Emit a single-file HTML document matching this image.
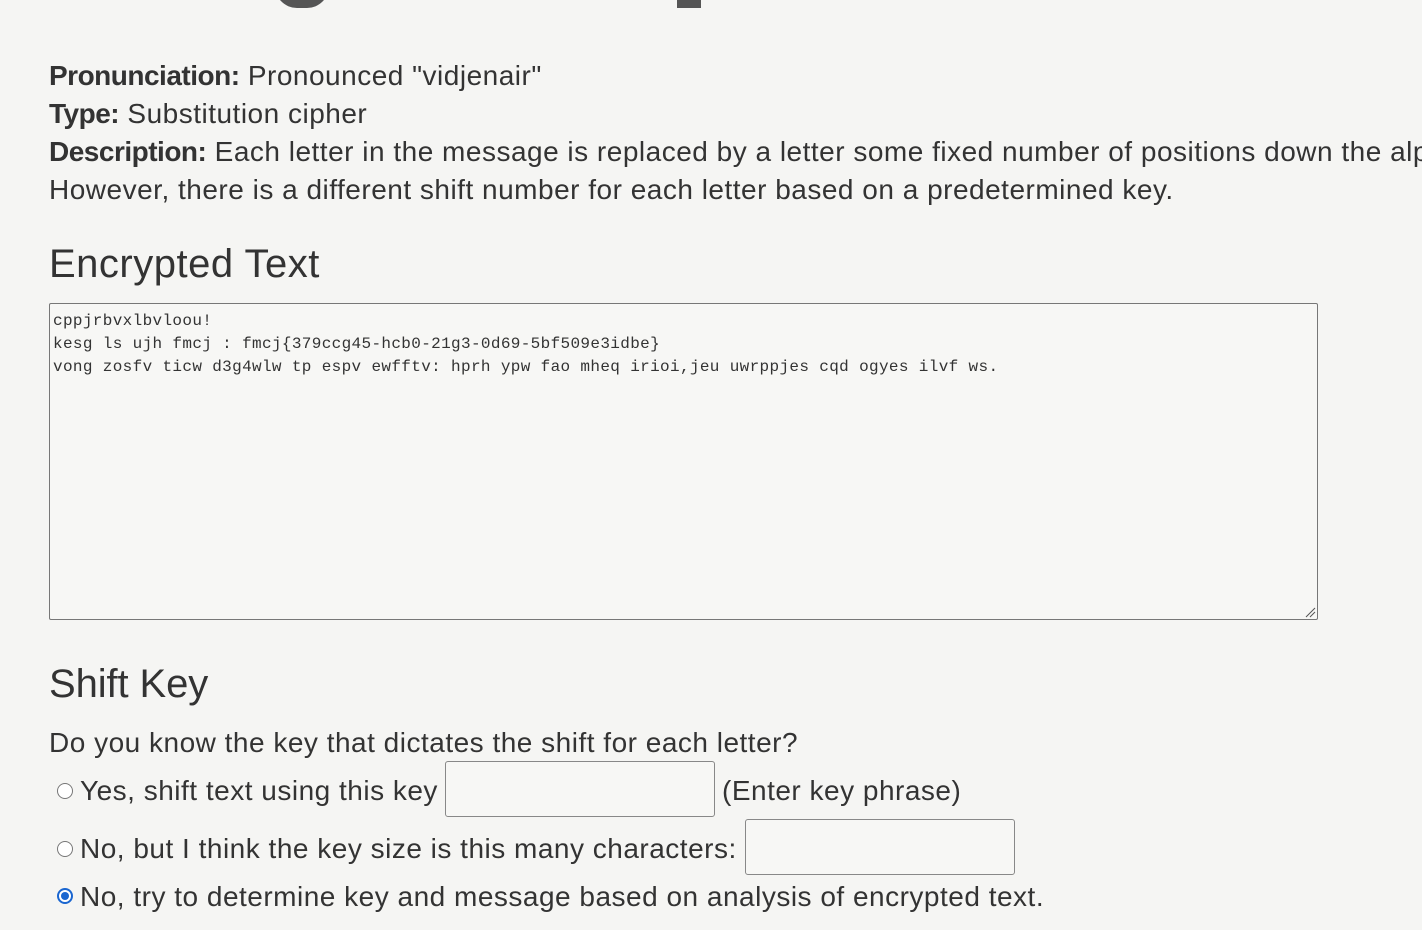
<!DOCTYPE html>
<html><head><meta charset="utf-8"><style>
html,body{margin:0;padding:0;width:1422px;height:930px;overflow:hidden;background:#f5f5f3;}
body{font-family:"Liberation Sans",sans-serif;color:#333;position:relative;}
.t{position:absolute;left:49px;white-space:nowrap;font-size:28px;letter-spacing:0.5px;}
b{font-weight:bold;letter-spacing:-0.5px;}
h2{position:absolute;left:49px;margin:0;font-size:40px;font-weight:normal;letter-spacing:0.5px;color:#333;white-space:nowrap;}
.ta{position:absolute;left:49px;top:303px;width:1269px;height:317px;border:1px solid #777;border-radius:2px;background:#f7f7f5;font-family:"Liberation Mono",monospace;font-size:16px;line-height:23px;padding:6px 3px;box-sizing:border-box;white-space:pre;letter-spacing:0.35px;color:#333;}
.in{position:absolute;height:56px;border:1px solid #888;border-radius:3px;background:#f7f7f5;box-sizing:border-box;}
.r{position:absolute;width:16px;height:16px;border:1px solid #777;border-radius:50%;box-sizing:border-box;background:#fff;left:57px;}
</style></head><body>
<div style="position:absolute;left:275px;top:-14px;width:54px;height:22px;border:8px solid #555;border-top:none;border-radius:0 0 30px 30px;box-sizing:border-box;"></div>
<div style="position:absolute;left:677px;top:0;width:24px;height:8px;background:#555;"></div>

<div class="t" style="top:60px"><b>Pronunciation:</b> Pronounced "vidjenair"</div>
<div class="t" style="top:98px"><b>Type:</b> Substitution cipher</div>
<div class="t" style="top:136px;width:1373px;overflow:hidden"><b>Description:</b> Each letter in the message is replaced by a letter some fixed number of positions down the alphabet.</div>
<div class="t" style="top:174px">However, there is a different shift number for each letter based on a predetermined key.</div>

<h2 style="top:242px">Encrypted Text</h2>
<div class="ta">cppjrbvxlbvloou!
kesg ls ujh fmcj : fmcj{379ccg45-hcb0-21g3-0d69-5bf509e3idbe}
vong zosfv ticw d3g4wlw tp espv ewfftv: hprh ypw fao mheq irioi,jeu uwrppjes cqd ogyes ilvf ws.</div>
<svg style="position:absolute;left:1304px;top:606px" width="12" height="12"><path d="M2 11L11 2M6 11L11 6" stroke="#555" stroke-width="1"/></svg>

<h2 style="top:662px;letter-spacing:-0.1px">Shift Key</h2>
<div class="t" style="top:727px">Do you know the key that dictates the shift for each letter?</div>

<div class="r" style="top:783px"></div>
<div class="t" style="top:775px;left:80px">Yes, shift text using this key</div>
<div class="in" style="left:445px;top:761px;width:270px"></div>
<div class="t" style="top:775px;left:722px">(Enter key phrase)</div>

<div class="r" style="top:841px"></div>
<div class="t" style="top:833px;left:80px">No, but I think the key size is this many characters:</div>
<div class="in" style="left:745px;top:819px;width:270px"></div>

<div class="r" style="top:888px;border:2px solid #1a66d0;background:#fff"><div style="position:absolute;left:2px;top:2px;width:8px;height:8px;border-radius:50%;background:#1a66d0"></div></div>
<div class="t" style="top:881px;left:80px">No, try to determine key and message based on analysis of encrypted text.</div>
</body></html>
